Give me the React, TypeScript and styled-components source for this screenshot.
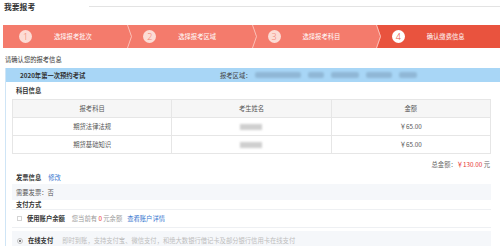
import React from "react";
import styled, { createGlobalStyle } from "styled-components";

const Global = createGlobalStyle`
  html, body { margin: 0; padding: 0; background: #fff; }
  body {
    width: 500px;
    overflow: hidden;
    font-family: "Noto Sans CJK SC", "Noto Sans", sans-serif;
    color: #333;
    font-size: 6.3px;
  }
  * { box-sizing: border-box; }
`;

const Page = styled.div`
  width: 500px;
  height: 246px;
  overflow: hidden;
`;

const TitleRow = styled.div`
  display: flex;
  align-items: flex-start;
  height: 25px;
`;

const Title = styled.h1`
  margin: 0;
  padding: 2px 0 0 4px;
  font-size: 7.8px;
  line-height: 10px;
  font-weight: 700;
  color: #333;
  white-space: nowrap;
`;

const TitleLine = styled.div`
  flex: 1;
  margin: 6px 0 0 54px;
  border-top: 1px solid #e3e3e3;
`;

const StepBar = styled.div`
  display: flex;
  height: 23px;
  margin-left: 3px;
`;

const Step = styled.div<{ $active?: boolean }>`
  position: relative;
  flex: 1;
  display: flex;
  align-items: center;
  padding-left: 16px;
  gap: 22px;
  background: ${(p) => (p.$active ? "#e9533e" : "#f47b6c")};
  color: #fff;
`;

const Circle = styled.span<{ $active?: boolean }>`
  width: 13px;
  height: 13px;
  border-radius: 50%;
  display: flex;
  align-items: center;
  justify-content: center;
  background: ${(p) => (p.$active ? "#fff" : "#fcdcd5")};
  color: ${(p) => (p.$active ? "#e9533e" : "#f28676")};
  font-family: "Noto Sans", sans-serif;
  font-size: 9px;
  font-weight: 300;
  line-height: 1;
`;

const StepLabel = styled.span`
  font-size: 6.3px;
  line-height: 8px;
  color: #fff;
  white-space: nowrap;
`;

const ArrowSvg = styled.svg`
  position: absolute;
  top: 0;
  right: -5px;
  z-index: 1;
`;

const Notice = styled.div`
  margin-top: 8px;
  padding-left: 5px;
  height: 8px;
  line-height: 8px;
  font-size: 6.3px;
  color: #333;
`;

const Panel = styled.div`
  margin: 4px 0 0 5px;
  border-left: 1px solid #cfe5f6;
  height: 200px;
`;

const PanelHead = styled.div`
  display: flex;
  align-items: center;
  height: 14px;
  padding-left: 14px;
  background: #a8d6f6;
  color: #333;
`;

const ExamName = styled.span`
  font-weight: 700;
  width: 200px;
  white-space: nowrap;
`;

const AreaLabel = styled.span`
  white-space: nowrap;
  color: #444;
  margin-right: 4px;
`;

const Blur = styled.span<{ $w: number }>`
  display: inline-block;
  width: ${(p) => p.$w}px;
  height: 6px;
  margin-right: 7px;
  background: #7d9fbd;
  border-radius: 2px;
  filter: blur(1.3px);
  opacity: 0.55;
`;

const PanelBody = styled.div`
  padding: 0 9px 0 6px;
`;

const SectionTitle = styled.div<{ $h?: number; $mt?: number }>`
  height: ${(p) => p.$h ?? 8}px;
  margin-top: ${(p) => p.$mt ?? 0}px;
  line-height: 8px;
  padding-left: 4px;
  font-weight: 700;
  color: #333;
  display: flex;
  align-items: flex-end;
  gap: 7px;
`;

const Link = styled.a`
  color: #3a78d0;
  font-weight: 400;
  text-decoration: none;
`;

const Table = styled.table`
  width: 100%;
  border-collapse: collapse;
  table-layout: fixed;
  color: #555;
`;

const Th = styled.th`
  height: 18px;
  background: #f6f6f6;
  border: 1px solid #e6e6e6;
  font-weight: 400;
  padding: 0;
`;

const Td = styled.td`
  height: 18px;
  border: 1px solid #e6e6e6;
  text-align: center;
  padding: 0;
`;

const NameBlur = styled.span`
  display: inline-block;
  width: 22px;
  height: 6px;
  background: #cfcfcf;
  filter: blur(1.2px);
  vertical-align: middle;
`;

const Total = styled.div`
  margin-top: 7px;
  height: 8px;
  line-height: 8px;
  text-align: right;
  padding-right: 1px;
  color: #666;
`;

const Red = styled.span`
  color: #e8302f;
`;

const Gray = styled.span`
  color: #999;
`;

const InfoRow = styled.div<{ $bg?: boolean; $bordered?: boolean; $mt: number; $h: number }>`
  display: flex;
  align-items: center;
  gap: 5px;
  margin-top: ${(p) => p.$mt}px;
  height: ${(p) => p.$h}px;
  padding-left: 4px;
  background: ${(p) => (p.$bg ? "#f5f7fa" : "#fff")};
  border-top: ${(p) => (p.$bordered ? "1px solid #eef0f3" : "none")};
  border-bottom: ${(p) => (p.$bordered ? "1px solid #eef0f3" : "none")};
  white-space: nowrap;
`;

const Check = styled.span`
  width: 5px;
  height: 5px;
  margin-left: 1px;
  border: 1px solid #d4d4d4;
  background: #fff;
`;

const Radio = styled.span`
  width: 6px;
  height: 6px;
  margin-left: 1px;
  border-radius: 50%;
  border: 1px solid #c4c4c4;
  display: flex;
  align-items: center;
  justify-content: center;
  &::after {
    content: "";
    width: 2px;
    height: 2px;
    border-radius: 50%;
    background: #555;
  }
`;

const Strong = styled.span`
  font-weight: 700;
  color: #333;
  margin-right: 2px;
`;

const Desc = styled.span`
  color: #bdbdbd;
  margin-left: 2px;
`;

function Arrow({ fill }: { fill: string }) {
  return (
    <ArrowSvg width="8" height="23" viewBox="0 0 8 23">
      <polygon points="0,0 4,0 8,11.5 4,23 0,23" fill={fill} />
      <polyline points="3.5,0 7.5,11.5 3.5,23" fill="none" stroke="#fdd3cc" strokeWidth="0.8" />
    </ArrowSvg>
  );
}

const steps = ["选择报考批次", "选择报考区域", "选择报考科目", "确认缴费信息"];

export default function App() {
  return (
    <Page>
      <Global />
      <TitleRow>
        <Title>我要报考</Title>
        <TitleLine />
      </TitleRow>
      <StepBar>
        {steps.map((s, i) => {
          const active = i === 3;
          return (
            <Step key={s} $active={active}>
              <Circle $active={active}>{i + 1}</Circle>
              <StepLabel>{s}</StepLabel>
              {i < 3 && <Arrow fill="#f47b6c" />}
            </Step>
          );
        })}
      </StepBar>
      <Notice>请确认您的报考信息</Notice>
      <Panel>
        <PanelHead>
          <ExamName>2020年第一次预约考试</ExamName>
          <AreaLabel>报考区域：</AreaLabel>
          <Blur $w={46} />
          <Blur $w={16} />
          <Blur $w={28} />
          <Blur $w={26} />
          <Blur $w={18} />
        </PanelHead>
        <PanelBody>
          <SectionTitle $h={13}>
            <span>科目信息</span>
          </SectionTitle>
          <Table style={{ marginTop: 4 }}>
            <thead>
              <tr>
                <Th>报考科目</Th>
                <Th>考生姓名</Th>
                <Th>金额</Th>
              </tr>
            </thead>
            <tbody>
              <tr>
                <Td>期货法律法规</Td>
                <Td>
                  <NameBlur />
                </Td>
                <Td>￥65.00</Td>
              </tr>
              <tr>
                <Td>期货基础知识</Td>
                <Td>
                  <NameBlur />
                </Td>
                <Td>￥65.00</Td>
              </tr>
            </tbody>
          </Table>
          <Total>
            总金额：<Red>￥130.00</Red> 元
          </Total>
          <SectionTitle $mt={5}>
            <span>发票信息</span>
            <Link>修改</Link>
          </SectionTitle>
          <InfoRow $bg $mt={2} $h={16}>
            <span style={{ color: "#555" }}>需要发票：否</span>
          </InfoRow>
          <SectionTitle $mt={1}>
            <span>支付方式</span>
          </SectionTitle>
          <InfoRow $bordered $mt={0} $h={19}>
            <Check />
            <Strong>使用账户余额</Strong>
            <span>
              <Gray>您当前有 </Gray>
              <Red> 0 </Red>
              <Gray> 元余额</Gray>
            </span>
            <Link>查看账户详情</Link>
          </InfoRow>
          <InfoRow $bg $mt={3} $h={19}>
            <Radio />
            <Strong>在线支付</Strong>
            <Desc>即时到账，支持支付宝、微信支付，和绝大数银行借记卡及部分银行信用卡在线支付</Desc>
          </InfoRow>
        </PanelBody>
      </Panel>
    </Page>
  );
}
